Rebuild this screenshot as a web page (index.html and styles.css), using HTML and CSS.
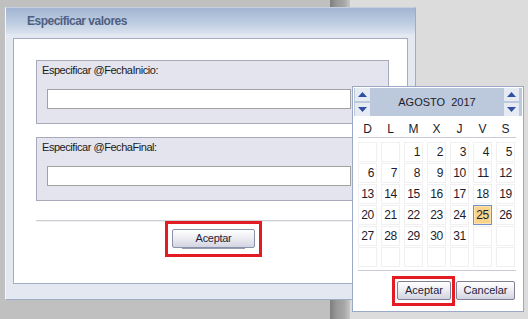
FILE: index.html
```html
<!DOCTYPE html>
<html>
<head>
<meta charset="UTF-8">
<title>Especificar valores</title>
<link rel="stylesheet" href="styles.css">
</head>
<body>
<div class="desktop">
	<div class="pane pane-left"></div>
	<div class="splitter"></div>
	<div class="pane pane-right"></div>
</div>

<div class="dialog">
	<div class="dialog-title">Especificar valores</div>
	<div class="dialog-body">
		<div class="panel">
			<div class="group">
				<div class="group-label">Especificar @FechaInicio:</div>
				<input class="field" type="text">
			</div>
			<div class="group">
				<div class="group-label">Especificar @FechaFinal:</div>
				<input class="field" type="text">
			</div>
			<div class="separator"></div>
			<div class="actions">
				<span class="highlight"><button class="btn btn-dialog" type="button">Aceptar</button></span>
			</div>
		</div>
	</div>
</div>

<div class="calendar">
	<div class="cal-head">
		<div class="spin">
			<span class="spin-btn"><svg width="9" height="5" viewBox="0 0 9 5"><polygon points="0,5 4.5,0 9,5" /></svg></span>
			<span class="spin-btn"><svg width="9" height="5" viewBox="0 0 9 5"><polygon points="0,0 9,0 4.5,5" /></svg></span>
		</div>
		<div class="cal-title">AGOSTO&nbsp; 2017</div>
		<div class="spin">
			<span class="spin-btn"><svg width="9" height="5" viewBox="0 0 9 5"><polygon points="0,5 4.5,0 9,5" /></svg></span>
			<span class="spin-btn"><svg width="9" height="5" viewBox="0 0 9 5"><polygon points="0,0 9,0 4.5,5" /></svg></span>
		</div>
	</div>
	<div class="cal-body">
		<div class="weekdays">
			<span>D</span><span>L</span><span>M</span><span>X</span><span>J</span><span>V</span><span>S</span>
		</div>
		<div class="days">
			<span class="day"></span><span class="day"></span><span class="day">1</span><span class="day">2</span><span class="day">3</span><span class="day">4</span><span class="day">5</span>
			<span class="day">6</span><span class="day">7</span><span class="day">8</span><span class="day">9</span><span class="day">10</span><span class="day">11</span><span class="day">12</span>
			<span class="day">13</span><span class="day">14</span><span class="day">15</span><span class="day">16</span><span class="day">17</span><span class="day">18</span><span class="day">19</span>
			<span class="day">20</span><span class="day">21</span><span class="day">22</span><span class="day">23</span><span class="day">24</span><span class="day today">25</span><span class="day">26</span>
			<span class="day">27</span><span class="day">28</span><span class="day">29</span><span class="day">30</span><span class="day">31</span><span class="day"></span><span class="day"></span>
			<span class="day"></span><span class="day"></span><span class="day"></span><span class="day"></span><span class="day"></span><span class="day"></span><span class="day"></span>
		</div>
	</div>
	<div class="cal-foot">
		<span class="highlight highlight-small"><button class="btn btn-cal" type="button">Aceptar</button></span>
		<button class="btn btn-cal btn-cancel" type="button">Cancelar</button>
	</div>
</div>
</body>
</html>
```

FILE: styles.css
```css
html, body {
	margin: 0;
	padding: 0;
}

body {
	width: 528px;
	height: 319px;
	overflow: hidden;
	position: relative;
	font-family: "Liberation Sans", Arial, sans-serif;
	font-size: 11px;
	color: #1c1c2c;
}

/* background panes behind the windows */
.desktop {
	display: flex;
	height: 100%;
}

.pane-left {
	width: 330px;
	background-color: #c0c0c0;
}

.splitter {
	width: 20px;
	background: linear-gradient(to right, #7e7e7e, #9a9a9a 35%, #a6a6a6 70%, #c6c6c6);
}

.pane-right {
	flex: 1;
	background-color: #dcdcdc;
}

/* dialog window */
.dialog {
	position: absolute;
	left: 5px;
	top: 7px;
	width: 411px;
	height: 293px;
	box-sizing: border-box;
	border: 1px solid #9eacc6;
	border-left-color: #f4f6fa;
	border-top-color: #c4cfdf;
	display: flex;
	flex-direction: column;
	background-color: #e4e8f1;
}

.dialog-title {
	height: 26px;
	line-height: 26px;
	padding-left: 21px;
	font-size: 12px;
	font-weight: bold;
	letter-spacing: -0.5px;
	color: #4f5f80;
	background: linear-gradient(#a2b5d3, #bccbe0 55%, #dae3ef);
}

.dialog-body {
	flex: 1;
	display: flex;
	padding: 4px 7px 15px 7px;
}

.panel {
	flex: 1;
	background-color: #fff;
	border: 1px solid #a3aec6;
	padding: 21px 18px 0 22px;
}

.group {
	height: 64px;
	box-sizing: border-box;
	border: 1px solid #a9a9bc;
	background-color: #e3e4ed;
	padding: 2px 0 0 5px;
	margin-bottom: 13px;
}

.group-label {
	line-height: 14px;
	letter-spacing: -0.45px;
	color: #1a1a1a;
}

.field {
	display: block;
	margin: 12px 0 0 5px;
	width: 304px;
	height: 20px;
	box-sizing: border-box;
	border: 1px solid #a2a2a2;
	background-color: #fff;
	padding: 0;
}

/* margin collapses with the group's 13px */
.separator {
	margin-top: 19px;
	border-top: 1px solid #cfcfd6;
	border-bottom: 1px solid #f0f0f3;
}

.actions {
	display: flex;
	justify-content: center;
	padding-left: 2px;
	margin-top: -1px;
}

.highlight {
	display: inline-block;
	border: 3px solid #e31b23;
	padding: 5px 4px 6px 4px;
}

.highlight-small {
	padding: 2px 1px 3px 2px;
}

.btn {
	position: relative;
	font-family: "Liberation Sans", Arial, sans-serif;
	font-size: 11px;
	color: #1e1e3c;
	height: 19px;
	padding: 0;
	box-sizing: border-box;
	border: 1px solid #8a92aa;
	border-radius: 2px;
	background: linear-gradient(#ffffff, #eeeef4 45%, #d3d4e1);
	line-height: 17px;
}

.btn-dialog {
	width: 83px;
	letter-spacing: -0.3px;
	display: block;
}

.btn-dialog::after {
	content: "";
	position: absolute;
	left: 9px;
	right: 9px;
	bottom: -2px;
	height: 1px;
	background-color: #9c9cae;
}

/* calendar popup */
.calendar {
	position: absolute;
	left: 352px;
	top: 86px;
	width: 172px;
	height: 226px;
	box-sizing: border-box;
	border: 1px solid #9aa9c7;
	padding: 1px;
	background-color: #fff;
	display: flex;
	flex-direction: column;
}

.cal-head {
	height: 28px;
	display: flex;
	justify-content: space-between;
	align-items: stretch;
	background-color: #bcc8dc;
	padding: 0 3px 0 1px;
}

.spin {
	width: 15px;
	display: flex;
	flex-direction: column;
	justify-content: space-between;
}

.spin-btn {
	height: 13px;
	display: flex;
	align-items: center;
	justify-content: center;
	background-color: #e6eaf3;
}

.spin-btn svg {
	fill: #2f4fa4;
}

.cal-title {
	line-height: 28px;
	color: #1c1c2c;
}

.cal-body {
	padding: 0 6px 0 4px;
}

.weekdays {
	display: grid;
	grid-template-columns: repeat(7, 19px);
	column-gap: 4px;
	margin-top: 5px;
	height: 16px;
	line-height: 16px;
	border-bottom: 1px solid #c9cad8;
	text-align: center;
	font-size: 12px;
}

.days {
	display: grid;
	grid-template-columns: repeat(7, 19px);
	grid-auto-rows: 20px;
	column-gap: 4px;
	row-gap: 1px;
	margin-top: 4px;
	padding-bottom: 3px;
	border-bottom: 1px solid #c9cad8;
}

.day {
	box-sizing: border-box;
	border: 1px solid #f0f0f2;
	text-align: right;
	padding-right: 2px;
	line-height: 18px;
	font-size: 12px;
	letter-spacing: -0.3px;
}

.today {
	border-color: #6f90cc;
	background-color: #fbd48c;
	box-shadow: inset 0 0 0 1px #fde4b2;
}

.cal-foot {
	display: flex;
	justify-content: flex-end;
	align-items: flex-start;
	padding: 5px 7px 0 0;
}

.btn-cal {
	display: block;
	width: 54px;
	border-color: #7f8094;
}

.btn-cancel {
	width: 59px;
	margin-left: 1px;
	margin-top: 5px;
}
```
